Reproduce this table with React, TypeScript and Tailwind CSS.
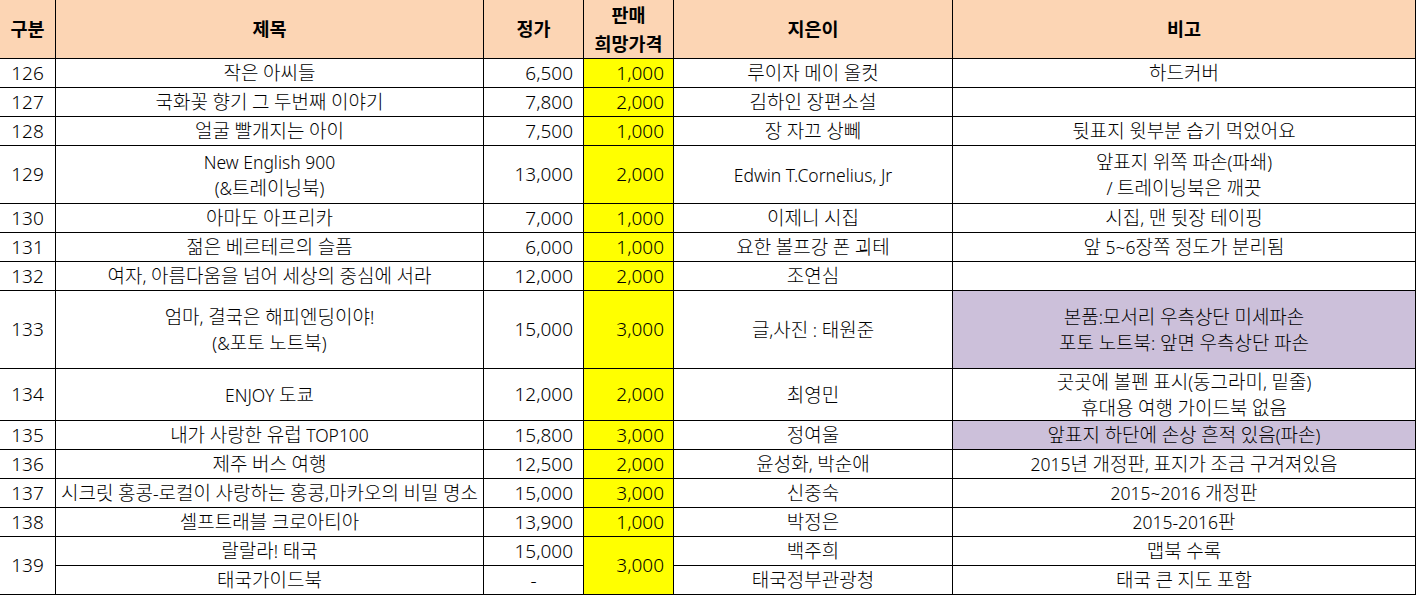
import React from 'react';

type Row = {
  no: string;
  title: string[];
  price: string;
  hope: string;
  author: string;
  note: string[];
  purple?: boolean;
};

const rows: Row[] = [
  { no: '126', title: ['작은 아씨들'], price: '6,500', hope: '1,000', author: '루이자 메이 올컷', note: ['하드커버'] },
  { no: '127', title: ['국화꽃 향기 그 두번째 이야기'], price: '7,800', hope: '2,000', author: '김하인 장편소설', note: [] },
  { no: '128', title: ['얼굴 빨개지는 아이'], price: '7,500', hope: '1,000', author: '장 자끄 상뻬', note: ['뒷표지 윗부분 습기 먹었어요'] },
  {
    no: '129',
    title: ['New English 900', '(&트레이닝북)'],
    price: '13,000',
    hope: '2,000',
    author: 'Edwin T.Cornelius, Jr',
    note: ['앞표지 위쪽 파손(파쇄)', '/ 트레이닝북은 깨끗'],
  },
  { no: '130', title: ['아마도 아프리카'], price: '7,000', hope: '1,000', author: '이제니 시집', note: ['시집, 맨 뒷장 테이핑'] },
  { no: '131', title: ['젊은 베르테르의 슬픔'], price: '6,000', hope: '1,000', author: '요한 볼프강 폰 괴테', note: ['앞 5~6장쪽 정도가 분리됨'] },
  { no: '132', title: ['여자, 아름다움을 넘어 세상의 중심에 서라'], price: '12,000', hope: '2,000', author: '조연심', note: [] },
  {
    no: '133',
    title: ['엄마, 결국은 해피엔딩이야!', '(&포토 노트북)'],
    price: '15,000',
    hope: '3,000',
    author: '글,사진 : 태원준',
    note: ['본품:모서리 우측상단 미세파손', '포토 노트북: 앞면 우측상단 파손'],
    purple: true,
  },
  {
    no: '134',
    title: ['ENJOY 도쿄'],
    price: '12,000',
    hope: '2,000',
    author: '최영민',
    note: ['곳곳에 볼펜 표시(동그라미, 밑줄)', '휴대용 여행 가이드북 없음'],
  },
  { no: '135', title: ['내가 사랑한 유럽 TOP100'], price: '15,800', hope: '3,000', author: '정여울', note: ['앞표지 하단에 손상 흔적 있음(파손)'], purple: true },
  { no: '136', title: ['제주 버스 여행'], price: '12,500', hope: '2,000', author: '윤성화, 박순애', note: ['2015년 개정판, 표지가 조금 구겨져있음'] },
  { no: '137', title: ['시크릿 홍콩-로컬이 사랑하는 홍콩,마카오의 비밀 명소'], price: '15,000', hope: '3,000', author: '신중숙', note: ['2015~2016 개정판'] },
  { no: '138', title: ['셀프트래블 크로아티아'], price: '13,900', hope: '1,000', author: '박정은', note: ['2015-2016판'] },
];

const cell = 'border-r border-b border-black flex items-center whitespace-nowrap';
const text = "font-['Noto_Sans','Noto_Sans_CJK_KR',sans-serif] text-[17.5px] leading-[26px] font-light";
const num = "font-['Noto_Sans',sans-serif] text-[19px] font-light";

// hangul runs a little larger than latin runs, to keep Malgun-like proportions
function Mixed({ s }: { s: string }) {
  const parts = s.split(/([가-힣]+)/);
  return (
    <span>
      {parts.map((p, i) =>
        /[가-힣]/.test(p) ? (
          <span key={i} className="text-[19px]">
            {p}
          </span>
        ) : (
          <span key={i}>{p}</span>
        ),
      )}
    </span>
  );
}

function Lines({ lines }: { lines: string[] }) {
  return (
    <div className="flex flex-col items-center">
      {lines.map((l, i) => (
        <Mixed key={i} s={l} />
      ))}
    </div>
  );
}

const head = "font-['Noto_Sans','Noto_Sans_CJK_KR',sans-serif] text-[18.5px] font-bold";

export default function App() {
  return (
    <div className="bg-white min-h-screen text-black">
      <div className="grid grid-cols-[56px_428px_100px_90px_279px_463px] grid-rows-[59px_29px_29px_29px_58px_29px_29px_29px_78px_52px_29px_29px_29px_29px_29px_29px]">
        {/* header */}
        {['구분', '제목', '정가'].map((h) => (
          <div key={h} className={`${cell} ${head} justify-center bg-[#fcd5b4]`}>
            {h}
          </div>
        ))}
        <div className={`${cell} ${head} justify-center bg-[#fcd5b4] leading-[29px]`}>
          <div className="flex flex-col items-center">
            <span>판매</span>
            <span>희망가격</span>
          </div>
        </div>
        {['지은이', '비고'].map((h) => (
          <div key={h} className={`${cell} ${head} justify-center bg-[#fcd5b4]`}>
            {h}
          </div>
        ))}

        {rows.map((r) => (
          <React.Fragment key={r.no}>
            <div className={`${cell} ${num} justify-center`}>{r.no}</div>
            <div className={`${cell} ${text} justify-center`}>
              <Lines lines={r.title} />
            </div>
            <div className={`${cell} ${num} justify-end pr-[10px]`}>{r.price}</div>
            <div className={`${cell} ${num} justify-end pr-[9px] bg-[#ffff00]`}>{r.hope}</div>
            <div className={`${cell} ${text} justify-center`}>
              <Mixed s={r.author} />
            </div>
            <div className={`${cell} ${text} justify-center ${r.purple ? 'bg-[#ccc0da]' : ''}`}>
              <Lines lines={r.note} />
            </div>
          </React.Fragment>
        ))}

        {/* 139: two sub rows */}
        <div className={`${cell} ${num} justify-center row-span-2`}>139</div>
        <div className={`${cell} ${text} justify-center`}>
          <Mixed s="랄랄라! 태국" />
        </div>
        <div className={`${cell} ${num} justify-end pr-[10px]`}>15,000</div>
        <div className={`${cell} ${num} justify-end pr-[9px] bg-[#ffff00] row-span-2`}>3,000</div>
        <div className={`${cell} ${text} justify-center`}>
          <Mixed s="백주희" />
        </div>
        <div className={`${cell} ${text} justify-center`}>
          <Mixed s="맵북 수록" />
        </div>
        <div className={`${cell} ${text} justify-center`}>
          <Mixed s="태국가이드북" />
        </div>
        <div className={`${cell} ${num} justify-center`}>-</div>
        <div className={`${cell} ${text} justify-center`}>
          <Mixed s="태국정부관광청" />
        </div>
        <div className={`${cell} ${text} justify-center`}>
          <Mixed s="태국 큰 지도 포함" />
        </div>
      </div>
    </div>
  );
}
